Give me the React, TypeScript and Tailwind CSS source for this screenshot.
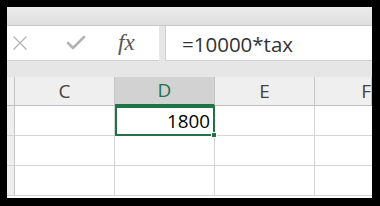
import { X, Check } from "lucide-react";

const font = { fontFamily: '"Open Sans", "Noto Sans", sans-serif' };

function HeaderCell({ label, active, className = "" }: { label: string; active?: boolean; className?: string }) {
  return (
    <div
      className={`flex items-center justify-center border-r border-[#c6c6c6] text-[19px] ${
        active ? "bg-[#d2d2d2] text-[#217346] border-b-2 border-b-[#217346]" : "bg-[#efefef] text-[#444] border-b border-b-[#bfbfbf]"
      } ${className}`}
    >
      {label}
    </div>
  );
}

export default function App() {
  return (
    <div className="w-[380px] h-[206px] bg-black pt-[7px] pl-[7px] pr-[8px] pb-[8px]" style={font}>
      <div className="h-full flex flex-col bg-[#e6e6e6] overflow-hidden">
        {/* ribbon strip */}
        <div className="h-[19px] shrink-0 bg-gradient-to-b from-[#ececec] to-[#dedede] border-b border-[#c8c8c8]" />

        {/* formula bar */}
        <div className="h-[35px] shrink-0 flex bg-[#e6e6e6]">
          <div className="w-[152px] bg-white flex items-center border-b border-[#d0d0d0]">
            <X className="w-[24px] h-[24px] ml-[1px] text-[#b4b4b4]" strokeWidth={1.4} />
            <Check className="w-[24px] h-[24px] ml-[32px] text-[#b4b4b4]" strokeWidth={2.6} />
            <span className="ml-[30px] text-[23px] italic text-[#555]" style={{ fontFamily: '"Liberation Serif", serif' }}>
              fx
            </span>
          </div>
          <div className="w-[6px]" />
          <div className="flex-1 bg-white flex items-center pl-[16px] pt-[2px] border-b border-l border-[#d0d0d0] text-[20.5px] text-[#333]">
            =10000*tax
          </div>
        </div>

        <div className="h-[16px] shrink-0" />

        {/* column headers */}
        <div className="h-[29px] shrink-0 flex">
          <div className="w-[8px] bg-[#efefef] border-r border-[#c6c6c6] border-b border-b-[#bfbfbf]" />
          <HeaderCell label="C" className="w-[100px]" />
          <HeaderCell label="D" active className="w-[100px]" />
          <HeaderCell label="E" className="w-[100px]" />
          <HeaderCell label="F" className="flex-1 justify-end" />
        </div>

        {/* grid */}
        <div className="flex-1 flex flex-col bg-white">
          {[0, 1, 2].map((r) => (
            <div key={r} className="h-[30px] shrink-0 flex">
              <div className="w-[8px] bg-[#efefef] border-r border-[#c6c6c6] border-b border-b-[#d4d4d4]" />
              <div className="w-[100px] border-r border-b border-[#d4d4d4]" />
              {r === 0 ? (
                <div className="w-[100px] relative border-2 border-[#217346] flex items-center justify-end pr-[3px] text-[18.8px] text-black">
                  1800
                  <div className="absolute -right-[4px] -bottom-[4px] w-[6px] h-[6px] bg-[#217346] border border-white" />
                </div>
              ) : (
                <div className="w-[100px] border-r border-b border-[#d4d4d4]" />
              )}
              <div className="w-[100px] border-r border-b border-[#d4d4d4]" />
              <div className="flex-1 border-b border-[#d4d4d4]" />
            </div>
          ))}
        </div>
      </div>
    </div>
  );
}
